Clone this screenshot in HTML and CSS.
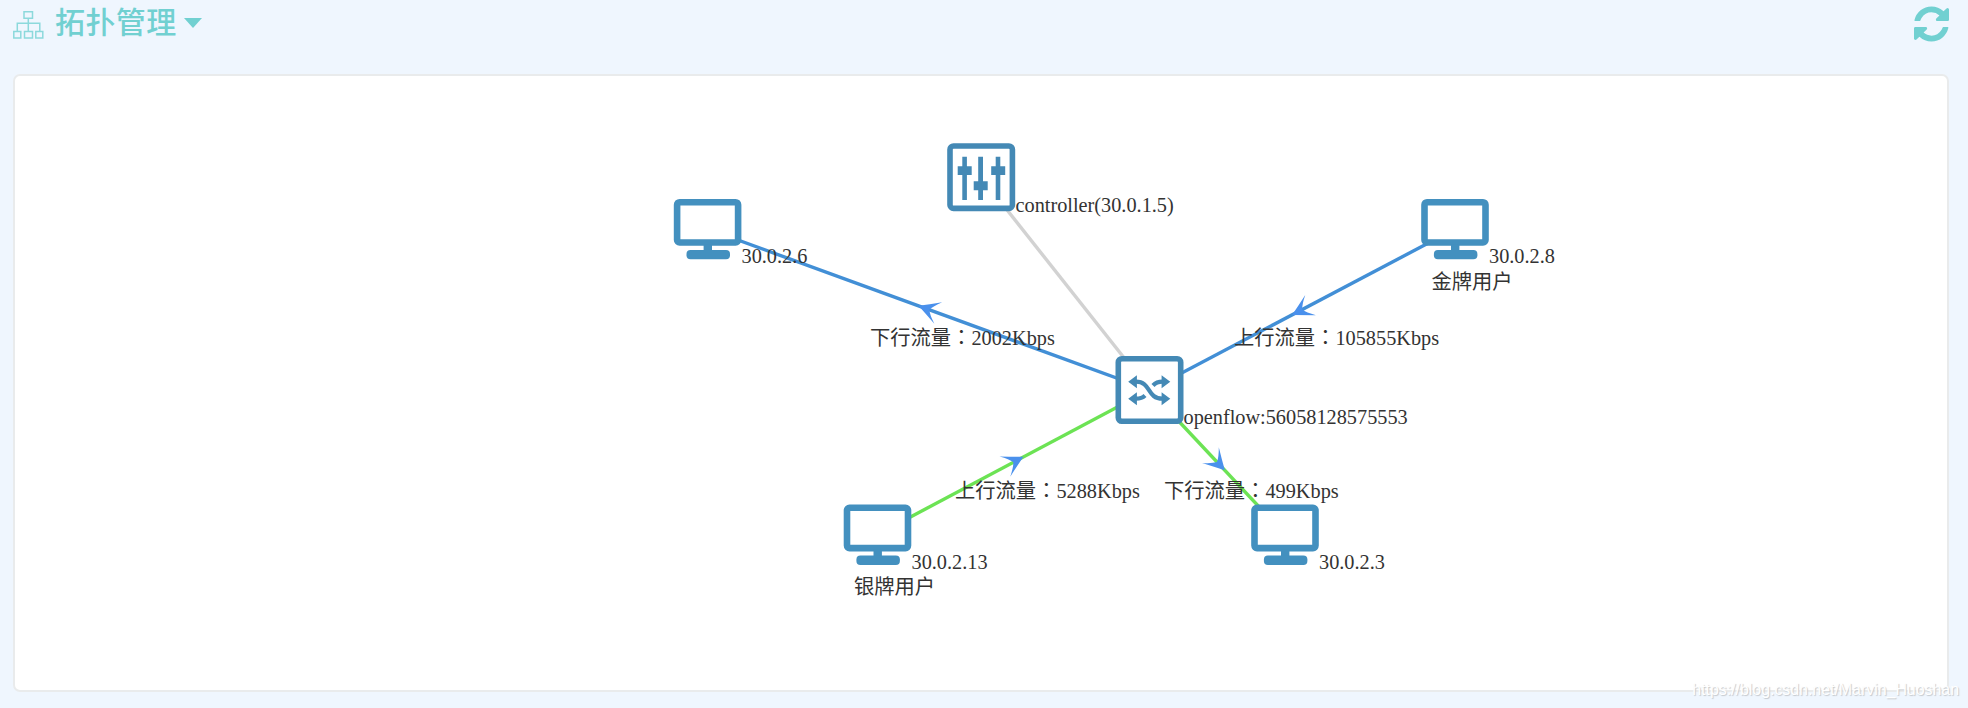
FILE: index.html
```
<!DOCTYPE html>
<html lang="zh">
<head>
    <meta charset="UTF-8" />
    <meta name="viewport" content="width=device-width, initial-scale=1.0" />
    <title>拓扑管理</title>
    <link rel="stylesheet" href="styles.css">
</head>
<body>
    <div class="header">
        <div class="title">
            <svg class="sitemap" width="32" height="28" viewBox="0 0 32 28">
                <path d="M11 .8h8.500v6.400h-8.500zM.8 20.500h7v6.500h-7zM11.500 20.500h8v6.500h-8zM22.800 20.500h7v6.500h-7zM15.300 7.200v13.300M4.300 20.500v-8.200h22.500v8.200" />
            </svg>
            <span class="title-text">拓扑管理</span>
            <span class="caret"></span>
        </div>
        <svg class="refresh" viewBox="0 0 1536 1536">
            <path d="M1511 928q0 5-1 7-64 268-268 434.500t-478 166.500q-146 0-282.500-55t-243.500-157l-129 129q-19 19-45 19t-45-19-19-45v-448q0-26 19-45t45-19h448q26 0 45 19t19 45-19 45l-137 137q71 66 161 102t187 36q134 0 250-65t186-179q11-17 53-117 8-23 30-23h192q13 0 22.500 9.500t9.500 22.500zm25-800v448q0 26-19 45t-45 19h-448q-26 0-45-19t-19-45 19-45l138-138q-148-137-349-137-134 0-250 65t-186 179q-11 17-53 117-8 23-30 23h-199q-13 0-22.500-9.500t-9.500-22.500v-7q65-268 270-434.500t480-166.500q146 0 284 55.500t245 156.500l130-129q19-19 45-19t45 19 19 45z" />
        </svg>
    </div>

    <div class="panel">
        <svg class="topology" viewBox="15 76 1932 614">
            <defs>
                <g id="host">
                    <rect class="screen" x="-30.700" y="-27" width="61" height="40.300" rx="2.500" />
                    <rect class="host-fill" x="-4.200" y="15" width="8.400" height="7" />
                    <rect class="host-fill" x="-21.300" y="20.800" width="43.500" height="9.300" rx="4" />
                </g>
                <g id="controller">
                    <rect class="box" x="-31.200" y="-31.200" width="62.400" height="62.400" rx="3.500" />
                    <path class="box-fill" d="M-18.900-20.500h4.600v43.300h-4.600zM-23.500-11h14v8.700h-14zM-3-20.500h4.800v43.300h-4.800zM-7.500 4h14v9h-14zM14.500-20.500h4.600v43.300h-4.600zM10-11h14v8.700h-14z" />
                </g>
                <g id="switch">
                    <rect class="box" x="-31.200" y="-31.200" width="62.400" height="62.400" rx="3.500" />
                    <path class="wire" d="M-13.500-8.300C2-8.300-3 8.700 13 8.700M13-8.300C8-8.300 6-7.200 3.500-4.500M-13.500 8.700C-9 8.700-7 8-4.500 5.500" />
                    <path class="box-fill" d="M-21.300-8.300l8.700-6.500v13zM-21.300 8.700l8.700-6.500v13zM20.800-8.300l-8.700-6.500v13zM20.800 8.700l-8.700-6.500v13z" />
                </g>
                <path id="arrow" d="M.5 0Q-9-5-20.500-11.500Q-13-4.500-11 0Q-13 4.500-20.500 11.500Q-9 5 .5 0z" />
            </defs>

            <!-- links -->
            <line class="link idle" x1="981" y1="177" x2="1149.500" y2="390" />
            <line class="link gold" x1="707.700" y1="229" x2="1149.500" y2="390" />
            <line class="link gold" x1="1455" y1="229" x2="1149.500" y2="390" />
            <line class="link silver" x1="877.500" y1="534.500" x2="1149.500" y2="390" />
            <line class="link silver" x1="1285" y1="534.500" x2="1149.500" y2="390" />

            <!-- flow direction -->
            <g class="arrows">
                <use href="#arrow" transform="translate(919 306) rotate(200)" />
                <use href="#arrow" transform="translate(1292.500 314.700) rotate(152.200)" />
                <use href="#arrow" transform="translate(1023 457) rotate(-27.800)" />
                <use href="#arrow" transform="translate(1224.500 470) rotate(46.700)" />
            </g>

            <!-- nodes -->
            <use href="#controller" x="981.200" y="177.200" />
            <use href="#switch" x="1149.500" y="390" />
            <use href="#host" x="707.800" y="229.200" />
            <use href="#host" x="1455.200" y="229.200" />
            <use href="#host" x="877.700" y="534.800" />
            <use href="#host" x="1285.200" y="534.800" />

            <g class="label">
                <text x="1015.500" y="211.500">controller(30.0.1.5)</text>
                <text x="1183.500" y="423.500">openflow:56058128575553</text>
                <text x="741.500" y="262.500">30.0.2.6</text>
                <text x="1489" y="262.500">30.0.2.8</text>
                <text x="1431.500" y="288.500">金牌用户</text>
                <text x="911.500" y="568.500">30.0.2.13</text>
                <text x="854" y="594">银牌用户</text>
                <text x="1319" y="568.500">30.0.2.3</text>
                <text x="870" y="344.500">下行流量<tspan class="colon" lang="zh-Hant">：</tspan>2002Kbps</text>
                <text x="1234" y="344.500">上行流量<tspan class="colon" lang="zh-Hant">：</tspan>105855Kbps</text>
                <text x="955" y="497.500">上行流量<tspan class="colon" lang="zh-Hant">：</tspan>5288Kbps</text>
                <text x="1164" y="497.500">下行流量<tspan class="colon" lang="zh-Hant">：</tspan>499Kbps</text>
            </g>
        </svg>
    </div>
    <div class="watermark">https://blog.csdn.net/Marvin_Huoshan</div>
</body>
</html>
```
FILE: styles.css
```
body {
    margin: 0;
    height: 708px;
    box-sizing: border-box;
    padding: 0 19px 0 13px;
    background: #eff6fe;
    overflow: hidden;
    position: relative;
}
.header {
    display: flex;
    justify-content: space-between;
    align-items: flex-start;
    height: 74px;
    color: #71d0d1;
}
.title {
    display: flex;
    align-items: flex-start;
}
.sitemap {
    margin-top: 11px;
    fill: none;
    stroke: #8cd9dc;
    stroke-width: 1.5;
}
.title-text {
    margin-left: 10px;
    font-family: "Noto Sans CJK SC", sans-serif;
    font-size: 30px;
    font-weight: 500;
    line-height: 41px;
    letter-spacing: 0.4px;
}
.caret {
    margin: 18px 0 0 7px;
    border-left: 9px solid transparent;
    border-right: 9px solid transparent;
    border-top: 10px solid #71d0d1;
}
.refresh {
    width: 35px;
    height: 36px;
    margin-top: 6px;
    fill: #71d0d1;
}
.panel {
    box-sizing: border-box;
    height: 618px;
    background: #fff;
    border: 2px solid #e9ebec;
    border-radius: 7px;
}
.topology {
    display: block;
    width: 1932px;
    height: 614px;
}
.link {
    stroke-width: 3.4;
}
.idle {
    stroke: #d2d2d2;
}
.gold {
    stroke: #428fd6;
}
.silver {
    stroke: #6ce354;
}
.arrows {
    fill: #4a90ec;
}
.screen {
    fill: #fff;
    stroke: #4390bf;
    stroke-width: 6.6;
}
.host-fill {
    fill: #4390bf;
}
.box {
    fill: #fff;
    stroke: #4489b5;
    stroke-width: 5.6;
}
.box-fill {
    fill: #4489b5;
}
.wire {
    fill: none;
    stroke: #4489b5;
    stroke-width: 4.2;
}
.label {
    font-family: "Liberation Serif", "Noto Sans CJK SC", serif;
    font-size: 20.3px;
    fill: #333;
}
.colon {
    font-family: "Noto Sans CJK TC", sans-serif;
}
.watermark {
    position: absolute;
    right: 9px;
    bottom: 8px;
    font-family: "Liberation Sans", sans-serif;
    font-size: 15.9px;
    line-height: 20px;
    color: #fff;
    text-shadow: 1px 1px 1px #c4c8cc;
}
```
